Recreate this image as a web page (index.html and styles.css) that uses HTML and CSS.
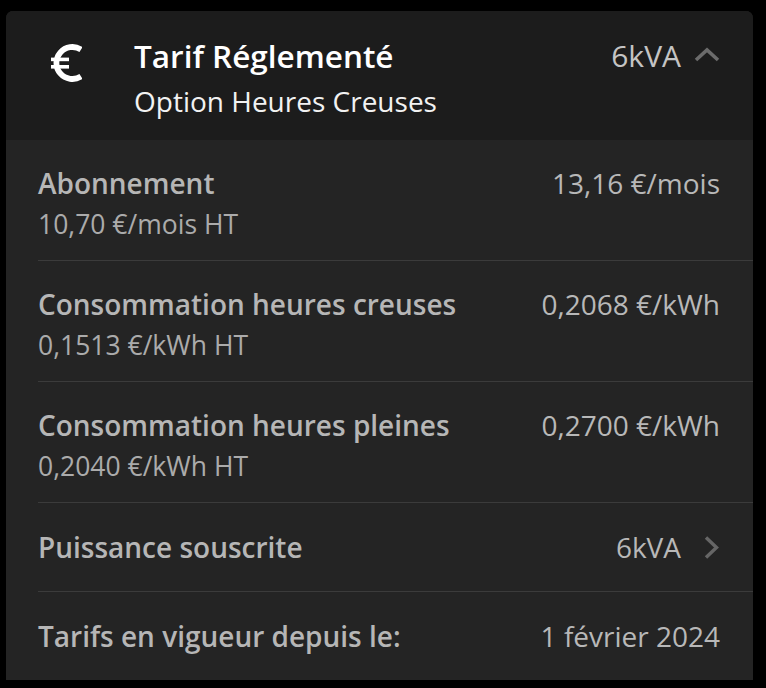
FILE: index.html
```html
<!DOCTYPE html>
<html lang="fr">
<head>
<meta charset="utf-8">
<title>Tarif Réglementé</title>
<link rel="stylesheet" href="styles.css">
</head>
<body>
<div class="card">
  <div class="header">
    <svg class="euro" width="31" height="39" viewBox="0 0 31 39">
      <path d="M30 5.5 A16 16 0 1 0 30 32.5" fill="none" stroke="#fff" stroke-width="5.8"/>
      <rect x="0" y="13.6" width="18" height="3.6" fill="#fff"/>
      <rect x="0" y="21" width="18" height="3.6" fill="#fff"/>
    </svg>
    <div class="titles">
      <div class="title">Tarif Réglementé</div>
      <div class="subtitle">Option Heures Creuses</div>
    </div>
    <div class="header-right">
      <span class="header-value">6kVA</span>
      <svg class="chev-up" width="26" height="15" viewBox="0 0 26 15">
        <polyline points="2,13 13,3 24,13" fill="none" stroke="#6b6b6b" stroke-width="3.6"/>
      </svg>
    </div>
  </div>
  <div class="rows">
    <div class="row">
      <div class="left">
        <div class="label">Abonnement</div>
        <div class="sub">10,70 €/mois HT</div>
      </div>
      <div class="value">13,16 €/mois</div>
    </div>
    <div class="row">
      <div class="left">
        <div class="label">Consommation heures creuses</div>
        <div class="sub">0,1513 €/kWh HT</div>
      </div>
      <div class="value">0,2068 €/kWh</div>
    </div>
    <div class="row">
      <div class="left">
        <div class="label">Consommation heures pleines</div>
        <div class="sub">0,2040 €/kWh HT</div>
      </div>
      <div class="value">0,2700 €/kWh</div>
    </div>
    <div class="row single">
      <div class="label">Puissance souscrite</div>
      <div class="value-nav">
        <span class="value">6kVA</span>
        <svg class="chev-right" width="16" height="25" viewBox="0 0 16 25">
          <polyline points="2,2.5 12.5,12.5 2,22.5" fill="none" stroke="#666" stroke-width="3.4"/>
        </svg>
      </div>
    </div>
    <div class="row single last">
      <div class="label">Tarifs en vigueur depuis le:</div>
      <div class="value">1 février 2024</div>
    </div>
  </div>
</div>
</body>
</html>
```
FILE: styles.css
```css
html, body {
  margin: 0;
  padding: 0;
  background: #000;
}
body {
  font-family: "Open Sans", "Noto Sans", sans-serif;
  padding: 11px 13px 0 6px;
}
.card {
  width: 747px;
  border-radius: 7px 7px 0 0;
  overflow: hidden;
  background: #242424;
}
.header {
  background: #1c1c1c;
  height: 129px;
  box-sizing: border-box;
  padding: 23px 33px 0 45px;
  display: flex;
  align-items: flex-start;
}
.euro {
  display: block;
  margin-top: 10px;
  flex: none;
}
.titles {
  margin-left: 52px;
  flex: 1;
}
.title {
  font-size: 31.5px;
  font-weight: 600;
  line-height: 44px;
  color: #fff;
}
.subtitle {
  font-size: 28px;
  line-height: 44px;
  margin-top: 1px;
  color: #f2f2f2;
}
.header-right {
  display: flex;
  align-items: center;
  height: 44px;
}
.header-value {
  font-size: 30px;
  color: #c4c4c4;
  line-height: 44px;
}
.chev-up {
  display: block;
  margin-left: 13px;
  margin-top: -3px;
}
.rows {
  display: flex;
  flex-direction: column;
}
.row {
  margin-left: 32px;
  padding: 23px 33px 16px 0;
  border-bottom: 1px solid #3b3b3b;
  display: flex;
  justify-content: space-between;
  align-items: flex-start;
}
.row.single {
  padding: 24px 33px 24px 0;
  align-items: center;
}
.row.last {
  border-bottom: none;
}
.label {
  font-size: 28px;
  font-weight: 600;
  line-height: 41px;
  color: #b6b6b6;
}
.row.single .label {
  line-height: 40px;
}
.sub {
  font-size: 26.5px;
  line-height: 40px;
  color: #ababab;
}
.value {
  font-size: 28px;
  line-height: 41px;
  color: #b8b8b8;
}
.row.single .value {
  line-height: 40px;
}
.value-nav {
  display: flex;
  align-items: center;
}
.chev-right {
  display: block;
  margin-left: 23px;
}
```
